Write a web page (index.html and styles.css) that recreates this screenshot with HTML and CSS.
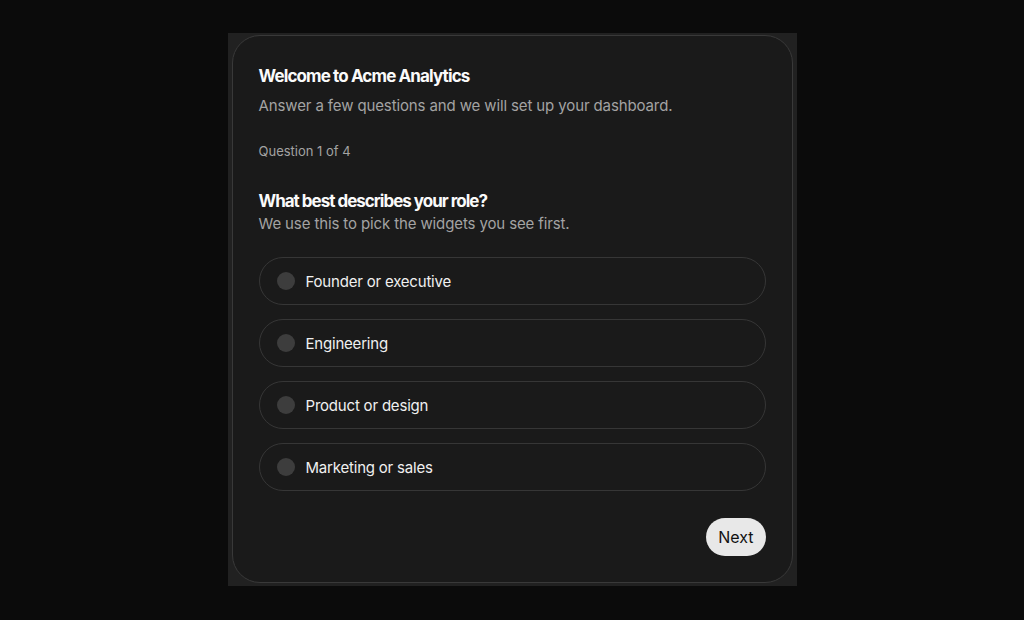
FILE: index.html
```html
<!DOCTYPE html>
<html lang="en">

<head>
    <meta charset="UTF-8">
    <meta name="viewport" content="width=device-width, initial-scale=1.0">
    <title>Acme Analytics - Onboarding</title>
    <link rel="stylesheet" href="styles.css">
</head>

<body>

    <div class="frame">
        <div class="card">
            <h1 class="title">Welcome to Acme Analytics</h1>
            <p class="subtitle">Answer a few questions and we will set up your dashboard.</p>

            <p class="step">Question 1 of 4</p>

            <h2 class="question">What best describes your role?</h2>
            <p class="hint">We use this to pick the widgets you see first.</p>

            <div class="options">
                <label class="option">
                    <span class="radio"></span>
                    <span>Founder or executive</span>
                </label>
                <label class="option">
                    <span class="radio"></span>
                    <span>Engineering</span>
                </label>
                <label class="option">
                    <span class="radio"></span>
                    <span>Product or design</span>
                </label>
                <label class="option">
                    <span class="radio"></span>
                    <span>Marketing or sales</span>
                </label>
            </div>

            <div class="actions">
                <button class="next">Next</button>
            </div>
        </div>
    </div>

</body>

</html>
```

FILE: styles.css
```css
* {
    box-sizing: border-box;
}

body {
    margin: 0;
    height: 100vh;
    padding-bottom: 1px;
    display: flex;
    justify-content: center;
    align-items: center;
    background-color: #0b0b0b;
    font-family: Inter, "Liberation Sans", sans-serif;
    color: #f2f2f2;
}

.frame {
    width: 569px;
    padding: 2px 4px 3px 4px;
    background-color: #212121;
}

.card {
    background-color: #1a1a1a;
    border: 1px solid #393939;
    border-radius: 28px;
    padding: 28px 26px 26px 26px;
}

.title {
    margin: 0;
    font-size: 17px;
    line-height: 24px;
    font-weight: 700;
    letter-spacing: -0.88px;
    color: #fafafa;
}

.subtitle {
    margin: 7px 0 0 0;
    font-size: 15px;
    line-height: 22px;
    letter-spacing: -0.12px;
    color: #a3a3a3;
}

.step {
    margin: 25px 0 0 0;
    font-size: 13px;
    line-height: 18px;
    color: #a3a3a3;
}

.question {
    margin: 29px 0 0 0;
    font-size: 17px;
    line-height: 24px;
    font-weight: 700;
    letter-spacing: -1px;
    color: #fafafa;
}

.hint {
    margin: 0;
    font-size: 15px;
    line-height: 22px;
    letter-spacing: -0.12px;
    color: #a3a3a3;
}

.options {
    display: flex;
    flex-direction: column;
    gap: 14px;
    margin-top: 22px;
}

.option {
    display: flex;
    align-items: center;
    gap: 11px;
    height: 48px;
    padding: 0 17px;
    border: 1px solid #363636;
    border-radius: 24px;
    font-size: 15px;
    letter-spacing: -0.2px;
    color: #f0f0f0;
    cursor: pointer;
}

.radio {
    width: 18px;
    height: 18px;
    border-radius: 50%;
    background-color: #3d3d3d;
    flex-shrink: 0;
}

.actions {
    display: flex;
    justify-content: flex-end;
    margin-top: 27px;
}

.next {
    height: 38px;
    padding: 0 12px;
    border: none;
    border-radius: 19px;
    background-color: #e8e8e8;
    color: #111;
    font-family: inherit;
    font-size: 16px;
    cursor: pointer;
}
```
